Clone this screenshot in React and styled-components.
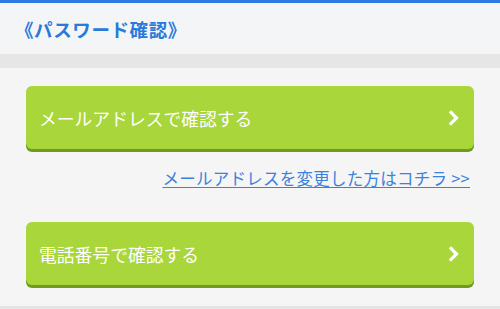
import React from "react";
import styled, { createGlobalStyle } from "styled-components";

const Global = createGlobalStyle`
  html, body {
    margin: 0;
    padding: 0;
    background: #f5f5f5;
    font-family: "Noto Sans CJK JP", "Noto Sans", sans-serif;
  }
`;

const Page = styled.div`
  width: 500px;
  height: 309px;
  overflow: hidden;
  display: flex;
  flex-direction: column;
  background: #f5f5f5;
`;

const Header = styled.header`
  height: 51px;
  border-top: 3px solid #2b7be3;
  background: #f4f5f7;
  display: flex;
  align-items: center;
  padding-left: 15px;
`;

const Title = styled.h1`
  margin: 0;
  font-size: 18.5px;
  font-weight: 700;
  color: #2a7ad9;
  letter-spacing: 0.6px;
`;

const Band = styled.div`
  height: 14px;
  background: #e6e6e6;
`;

const Content = styled.main`
  flex: 1;
  padding: 18px 26px 0;
  display: flex;
  flex-direction: column;
`;

const Button = styled.a`
  height: 63px;
  border-radius: 6px;
  background: #a8d63b;
  box-shadow: 0 3px 0 #6e9c1f;
  display: flex;
  align-items: center;
  justify-content: space-between;
  padding: 0 14px 0 13px;
  color: #ffffff;
  font-size: 17.8px;
  text-decoration: none;
  cursor: pointer;
`;

const LinkRow = styled.div`
  display: flex;
  justify-content: flex-end;
  padding-right: 4px;
  margin: 15px 0 30px;
  height: 28px;
  align-items: center;
`;

const TextLink = styled.a`
  font-size: 16.5px;
  letter-spacing: 0.25px;
  color: #3a83dc;
  text-decoration: underline;
  text-underline-offset: 2px;
`;

const Footer = styled.div`
  margin-top: auto;
  height: 3px;
  background: #e4e4e4;
`;

function Chevron() {
  return (
    <svg width="12" height="16" viewBox="0 0 12 16">
      <polyline
        points="3,2.5 8.5,8 3,13.5"
        fill="none"
        stroke="#ffffff"
        strokeWidth="3.2"
        strokeLinecap="square"
      />
    </svg>
  );
}

export default function App() {
  return (
    <Page>
      <Global />
      <Header>
        <Title>《パスワード確認》</Title>
      </Header>
      <Band />
      <Content>
        <Button>
          メールアドレスで確認する
          <Chevron />
        </Button>
        <LinkRow>
          <TextLink href="#">メールアドレスを変更した方はコチラ &gt;&gt;</TextLink>
        </LinkRow>
        <Button>
          電話番号で確認する
          <Chevron />
        </Button>
      </Content>
      <Footer />
    </Page>
  );
}
